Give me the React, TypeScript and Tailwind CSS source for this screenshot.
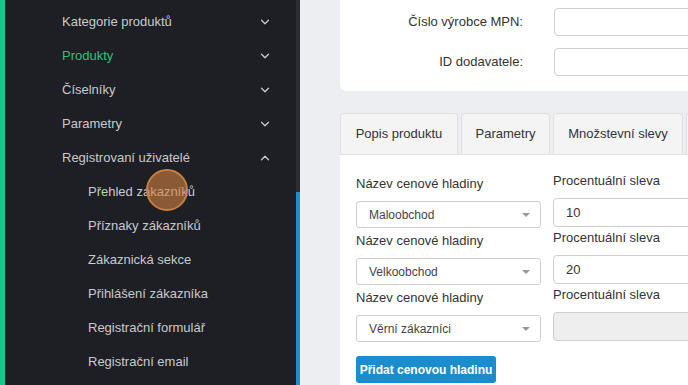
import { ChevronDown, ChevronUp } from "lucide-react";

const menu = [
  { label: "Kategorie produktů", open: false },
  { label: "Produkty", open: false, active: true },
  { label: "Číselníky", open: false },
  { label: "Parametry", open: false },
  { label: "Registrovaní uživatelé", open: true },
];

const subMenu = [
  "Přehled zákazníků",
  "Příznaky zákazníků",
  "Zákaznická sekce",
  "Přihlášení zákazníka",
  "Registrační formulář",
  "Registrační email",
];

const levels = [
  { name: "Maloobchod", discount: "10" },
  { name: "Velkoobchod", discount: "20" },
  { name: "Věrní zákazníci", discount: "", disabled: true },
];

function Sidebar() {
  return (
    <aside className="relative flex h-full w-[300px] shrink-0 bg-[#1d1f24]">
      {/* zelený proužek vlevo */}
      <div className="w-[5px] shrink-0 bg-[#14c98b]" />
      <nav className="flex-1 pt-[5px] text-[13px] text-[#c9cacc]">
        {menu.map((item) => (
          <div key={item.label} className="flex h-[34px] items-center pl-[57px] pr-[24px]">
            <span className={`flex-1 ${item.active ? "text-[#2fc17a]" : ""}`}>{item.label}</span>
            {item.open ? (
              <ChevronUp className="h-[14px] w-[14px]" strokeWidth={2.25} />
            ) : (
              <ChevronDown className="h-[14px] w-[14px]" strokeWidth={2.25} />
            )}
          </div>
        ))}
        {subMenu.map((label) => (
          <div key={label} className="flex h-[34px] items-center pl-[83px]">
            {label}
          </div>
        ))}
      </nav>
      {/* scrollbar */}
      <div className="flex w-[4px] shrink-0 flex-col">
        <div className="h-[192px] bg-[#2a2c31]" />
        <div className="flex-1 bg-[#1b8ed1]" />
      </div>
      {/* zvýraznění kurzoru */}
      <div className="absolute left-[146px] top-[169px] h-[42px] w-[42px] rounded-full border-2 border-[#c97d3e] bg-[rgba(212,129,66,0.6)]" />
    </aside>
  );
}

function Select({ value }: { value: string }) {
  return (
    <div className="flex h-[27px] items-center rounded-[3px] border border-[#cfcfcf] bg-white pl-[12px] pr-[10px] text-[12px] text-[#444]">
      <span className="flex-1">{value}</span>
      <span className="h-0 w-0 border-x-[4px] border-t-[4px] border-x-transparent border-t-[#999]" />
    </div>
  );
}

function Main() {
  return (
    <main className="flex min-w-0 flex-1 flex-col bg-[#eceef1] pl-[40px] text-[13px] text-[#333]">
      {/* horní karta */}
      <div className="flex h-[91px] flex-col gap-[12px] rounded-bl-[6px] bg-white pt-[8px]">
        {["Číslo výrobce MPN:", "ID dodavatele:"].map((label) => (
          <div key={label} className="flex items-center">
            <span className="w-[183px] shrink-0 text-right">{label}</span>
            <div className="ml-[31px] h-[28px] w-[200px] shrink-0 rounded-[4px] border border-[#cfcfcf] bg-white" />
          </div>
        ))}
      </div>

      {/* záložky */}
      <div className="mt-[22px] flex gap-[3px] border-b border-[#e1e1e1]">
        {["Popis produktu", "Parametry", "Množstevní slevy", ""].map((tab, i) => (
          <div
            key={i}
            className={`flex h-[41px] shrink-0 items-center justify-center rounded-t-[4px] border border-b-0 border-[#e1e1e1] bg-[#f4f4f4] ${
              ["w-[118px]", "w-[89px]", "w-[130px]", "w-[120px]"][i]
            }`}
          >
            {tab}
          </div>
        ))}
      </div>

      {/* obsah záložky */}
      <div className="flex-1 bg-white pl-[16px] pt-[16px]">
        {levels.map((level) => (
          <div key={level.name} className="flex gap-[12px]">
            <div className="w-[185px] shrink-0 pt-[3px]">
              <div className="mb-[7px] leading-[20px]">Název cenové hladiny</div>
              <Select value={level.name} />
            </div>
            <div className="w-[200px] shrink-0">
              <div className="mb-[7px] leading-[20px]">Procentuální sleva</div>
              <div
                className={`flex h-[29px] items-center rounded-[4px] border border-[#cfcfcf] pl-[12px] text-[13px] ${
                  level.disabled ? "bg-[#eeeeee]" : "bg-white"
                }`}
              >
                {level.discount}
              </div>
            </div>
          </div>
        ))}
        <button className="mt-[14px] h-[27px] w-[140px] rounded-[3px] bg-[#1a8dcf] text-[12px] font-bold text-white">
          Přidat cenovou hladinu
        </button>
      </div>
    </main>
  );
}

export default function App() {
  return (
    <div className="flex h-[385px] w-[688px] overflow-hidden font-['Liberation_Sans',Arial,sans-serif]">
      <Sidebar />
      <Main />
    </div>
  );
}
